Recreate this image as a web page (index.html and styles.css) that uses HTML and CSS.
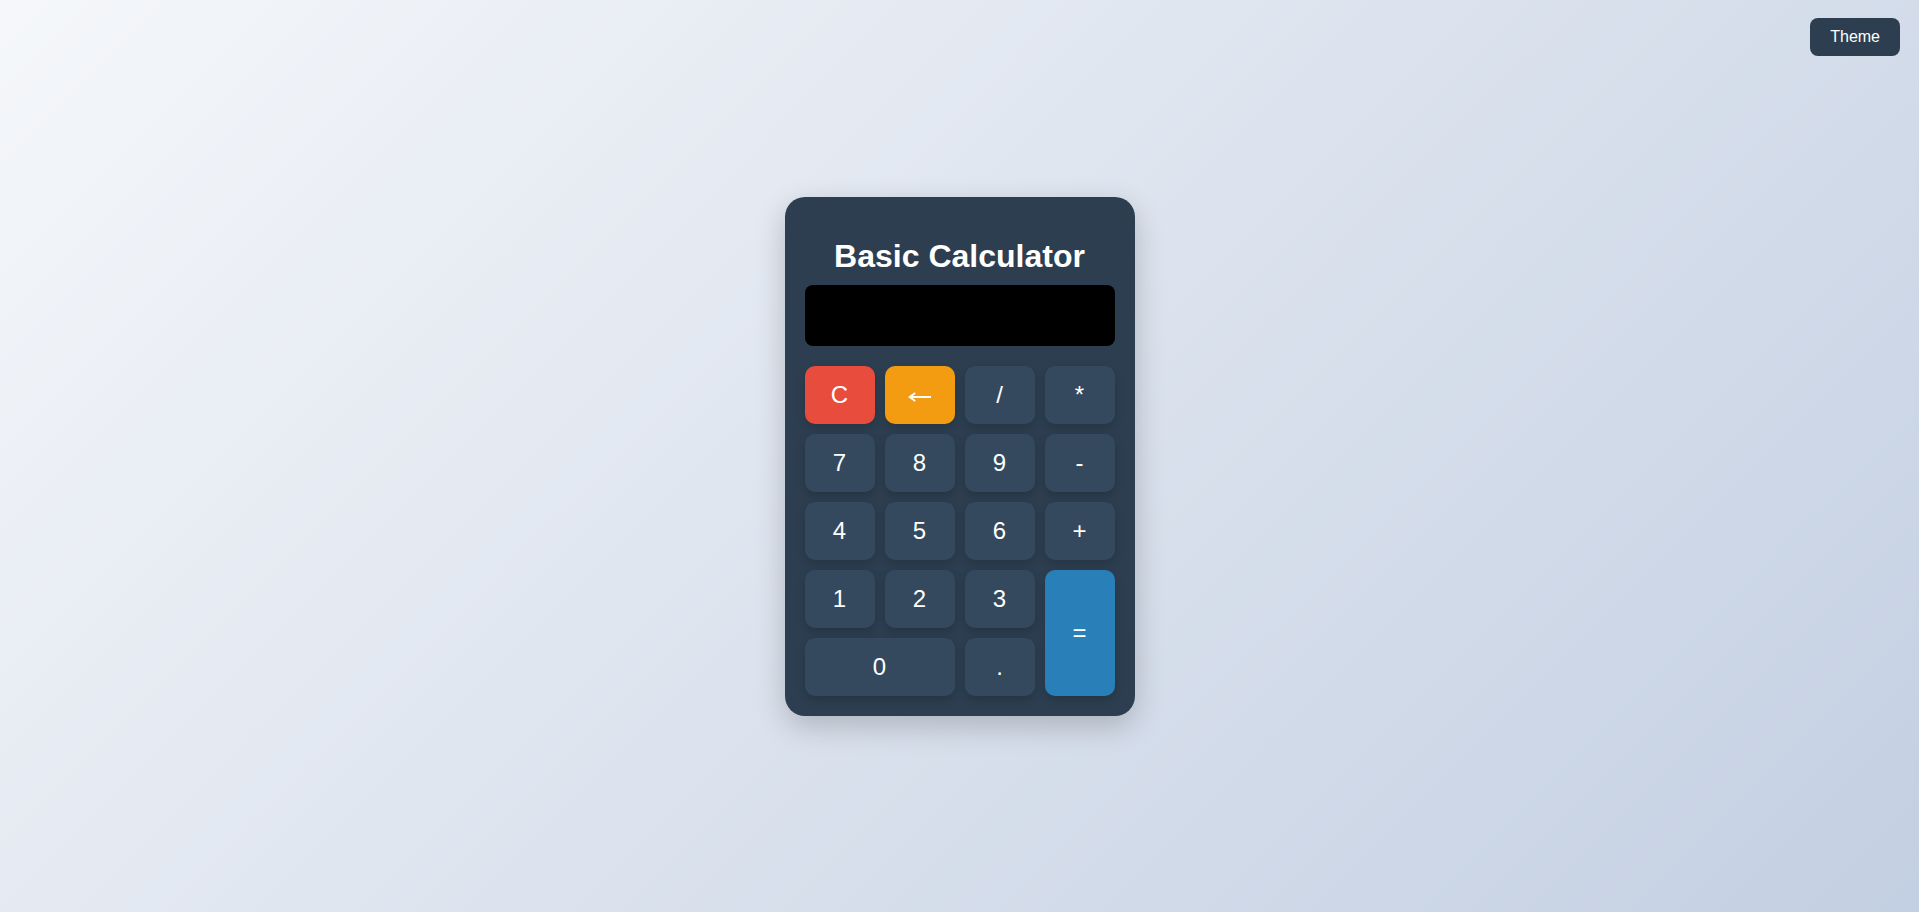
FILE: index.html
```html
<!DOCTYPE html>
<html lang="en">
<head>
<meta charset="utf-8">
<title>Basic Calculator</title>
<link rel="stylesheet" href="styles.css">
</head>
<body>
<button class="theme-toggle">Theme</button>
<div class="calculator">
  <h1 class="title">Basic Calculator</h1>
  <div class="display"></div>
  <div class="keys">
    <button class="key key-clear">C</button>
    <button class="key key-back" aria-label="←"><svg class="back-icon" width="24" height="10" viewBox="0 0 24 10"><path d="M1.6 5 H23 M7.2 1 L1.6 5 L7.2 9" fill="none" stroke="#ffffff" stroke-width="1.8" stroke-linecap="butt" stroke-linejoin="miter"/></svg></button>
    <button class="key">/</button>
    <button class="key">*</button>
    <button class="key">7</button>
    <button class="key">8</button>
    <button class="key">9</button>
    <button class="key">-</button>
    <button class="key">4</button>
    <button class="key">5</button>
    <button class="key">6</button>
    <button class="key">+</button>
    <button class="key">1</button>
    <button class="key">2</button>
    <button class="key">3</button>
    <button class="key key-equals">=</button>
    <button class="key key-zero">0</button>
    <button class="key">.</button>
  </div>
</div>
</body>
</html>
```

FILE: styles.css
```css
html, body {
  margin: 0;
  padding: 0;
}

body {
  min-height: 100vh;
  display: flex;
  align-items: center;
  justify-content: center;
  background: linear-gradient(135deg, #f5f7fa 0%, #c3cfe2 100%);
  font-family: "Liberation Sans", Arial, sans-serif;
}

.theme-toggle {
  position: fixed;
  top: 18px;
  right: 19px;
  padding: 10px 20px;
  border: none;
  border-radius: 8px;
  background: #2c3e50;
  color: #ffffff;
  font-family: "Liberation Sans", Arial, sans-serif;
  font-size: 16px;
  line-height: normal;
  cursor: pointer;
}

.calculator {
  width: 350px;
  box-sizing: border-box;
  padding: 20px;
  background: #2c3e50;
  border-radius: 20px;
  box-shadow: 0 10px 30px rgba(0, 0, 0, 0.2);
}

.title {
  margin: 21px 0 10px;
  color: #ffffff;
  font-size: 32px;
  font-weight: bold;
  text-align: center;
  line-height: normal;
}

.display {
  height: 61px;
  margin-bottom: 20px;
  background: #000000;
  border-radius: 8px;
}

.keys {
  display: grid;
  grid-template-columns: repeat(4, 70px);
  grid-auto-rows: 58px;
  gap: 10px;
}

.key {
  border: none;
  border-radius: 10px;
  background: #34495e;
  color: #ffffff;
  font-family: "Liberation Sans", Arial, sans-serif;
  font-size: 24px;
  padding: 0;
  box-shadow: 0 4px 8px rgba(0, 0, 0, 0.15);
  cursor: pointer;
}

.key-clear {
  background: #e74c3c;
}

.key-back {
  background: #f39c12;
  display: flex;
  align-items: center;
  justify-content: center;
  padding-top: 5px;
}

.back-icon {
  display: block;
}

.key-equals {
  background: #2980b9;
  grid-row: span 2;
}

.key-zero {
  grid-column: span 2;
}
```
